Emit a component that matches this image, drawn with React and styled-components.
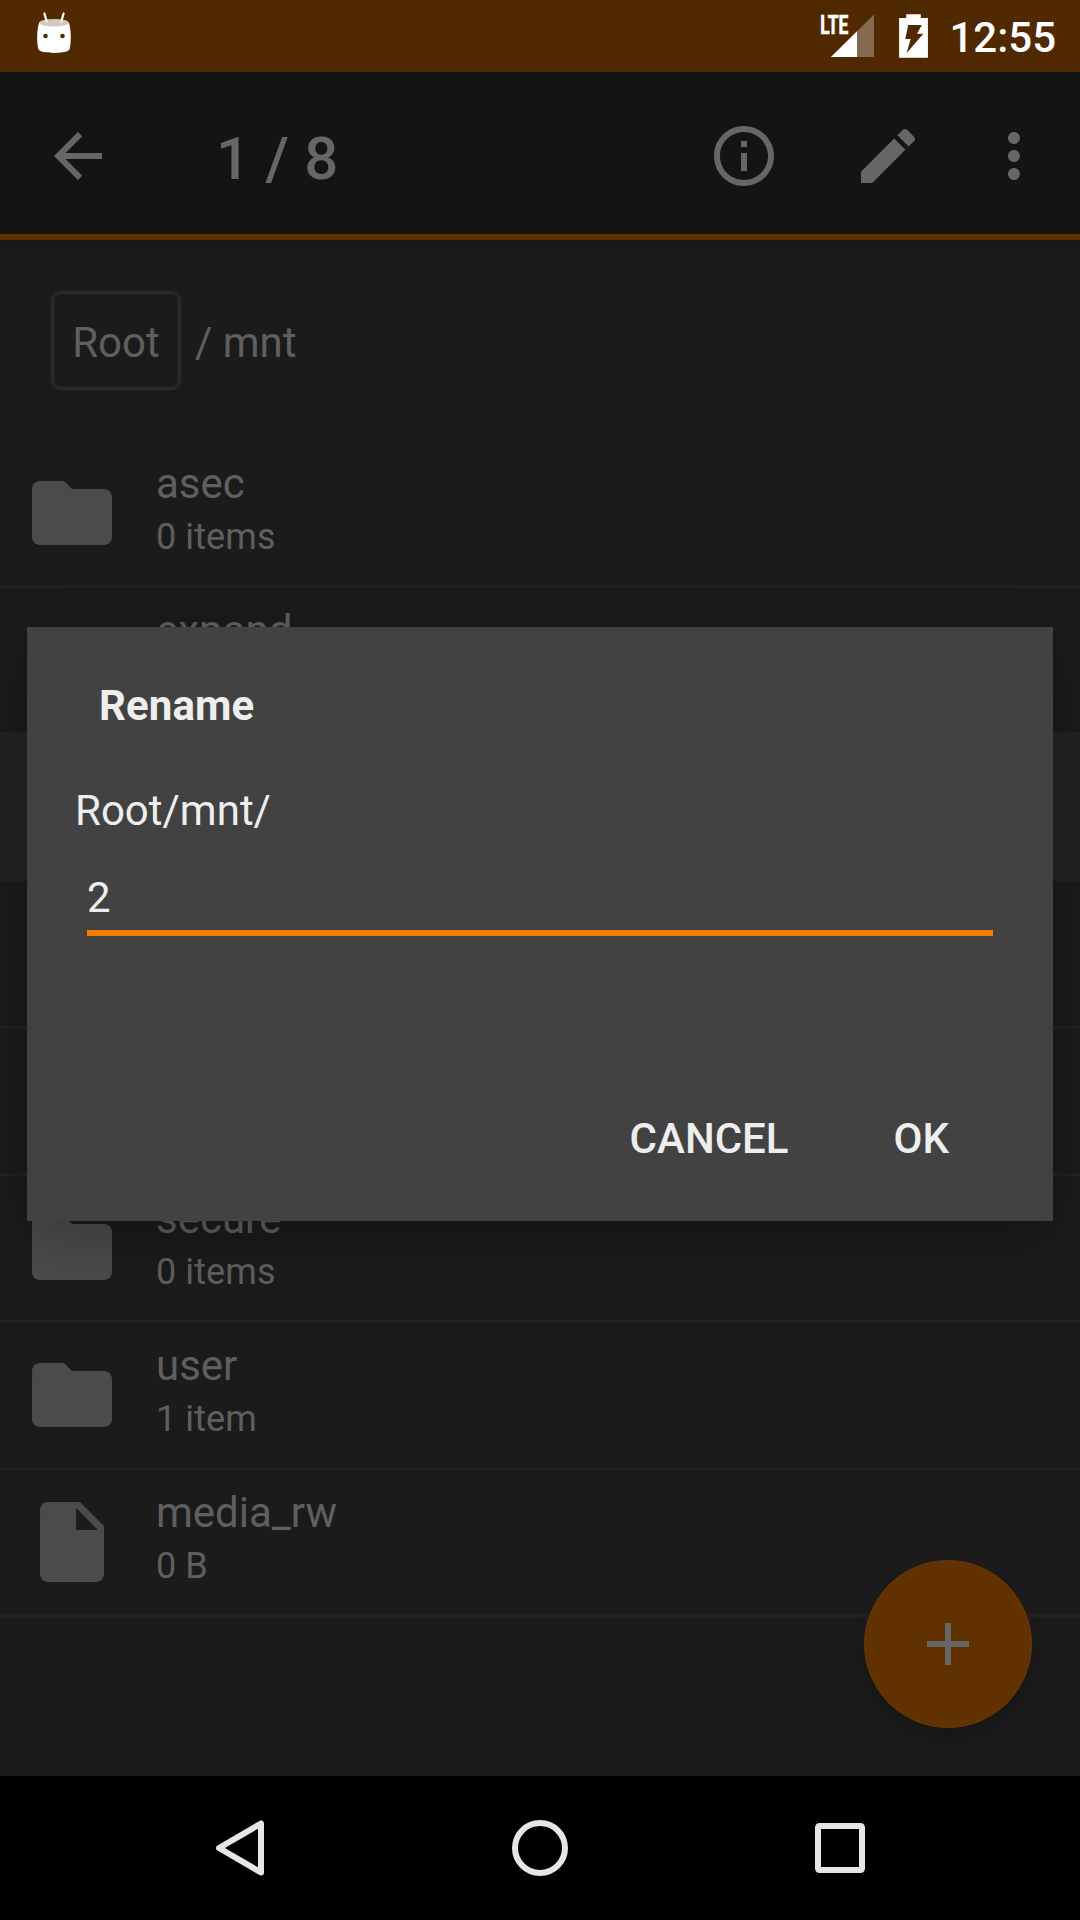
import React from "react";
import styled, { createGlobalStyle } from "styled-components";

const Global = createGlobalStyle`
  html, body { margin: 0; padding: 0; background: #000; }
  * { box-sizing: border-box; }
`;

const Device = styled.div`
  width: 1080px;
  height: 1920px;
  display: flex;
  flex-direction: column;
  overflow: hidden;
  background: #000;
  font-family: Roboto, "Noto Sans", sans-serif;
  font-size: 42px;
  line-height: 50px;
  white-space: pre;
`;

const StatusBar = styled.header`
  height: 72px;
  flex: none;
  display: flex;
  justify-content: space-between;
  background: #512900;
  color: #fff;
  padding: 0 24px;
`;

const StatusGroup = styled.div`
  display: flex;
  align-items: flex-start;
`;

const Clock = styled.time`
  font-weight: 500;
  line-height: 76px;
`;

const Screen = styled.main`
  position: relative;
  flex: 1;
  display: flex;
  flex-direction: column;
  background: #1b1b1b;
  color: #5f5f5f;
`;

const Toolbar = styled.div`
  height: 168px;
  flex: none;
  display: flex;
  align-items: center;
  padding: 6px 30px 0 42px;
  background: #141414;
  border-bottom: 6px solid #613100;
  color: #666;
  box-shadow: 0 3px 12px rgba(0, 0, 0, 0.22);
`;

const Title = styled.h1`
  flex: 1;
  margin: 0 0 0 102px;
  padding-top: 5px;
  font-size: 60px;
  line-height: 72px;
  font-weight: 500;
  letter-spacing: 0.2px;
`;

const Actions = styled.div`
  display: flex;
  align-items: center;
  gap: 72px;
  margin-right: 54px;
`;

const Glyph = styled.svg`
  display: block;
  flex: none;
  width: ${(p) => p.$size}px;
  height: ${(p) => p.$size}px;
  fill: currentColor;
`;

const Breadcrumbs = styled.nav`
  height: 201px;
  flex: none;
  display: flex;
  align-items: flex-start;
  padding: 51px 51px 0;
`;

const Crumb = styled.div`
  width: 130px;
  height: 99px;
  padding-top: 24px;
  text-align: center;
  border: 3px solid #292929;
  border-radius: 9px;
  box-shadow: 0 0 2px #262626, inset 0 0 2px #262626;
`;

const CrumbTail = styled.span`
  margin-left: 14px;
  padding-top: 27px;
`;

const List = styled.ul`
  list-style: none;
  margin: 0;
  padding: 0;
`;

const Row = styled.li`
  height: 147px;
  display: flex;
  padding-left: 24px;
  border-bottom: 3px solid #222;
  background: ${(p) => (p.$selected ? "#222" : "transparent")};
`;

const RowIcon = styled.div`
  display: flex;
  align-items: center;
  color: #4b4b4b;
`;

const RowText = styled.div`
  display: flex;
  flex-direction: column;
  gap: 7px;
  padding: 18px 0 0 36px;
`;

const Name = styled.span`
  height: 50px;
`;

const Detail = styled.span`
  font-size: 36px;
  line-height: 42px;
  letter-spacing: 0.1px;
`;

const Fab = styled.button`
  position: absolute;
  right: 48px;
  bottom: 48px;
  width: 168px;
  height: 168px;
  display: flex;
  align-items: center;
  justify-content: center;
  padding: 0;
  border: 1px solid #65360a;
  border-radius: 50%;
  background: #613100;
  color: #666;
  box-shadow: 0 10px 18px rgba(0, 0, 0, 0.2);
`;

const Overlay = styled.div`
  position: absolute;
  inset: 0;
  display: flex;
  align-items: center;
  justify-content: center;
`;

const Dialog = styled.section`
  width: 1026px;
  height: 594px;
  display: flex;
  flex-direction: column;
  background: #424242;
  color: #eee;
  box-shadow: 0 18px 54px rgba(0, 0, 0, 0.24);
`;

const DialogTitle = styled.h2`
  margin: 0;
  padding: 54px 72px 0;
  font-size: 42px;
  line-height: 50px;
  font-weight: 700;
  letter-spacing: 0.1px;
`;

const DialogPath = styled.div`
  padding: 55px 48px 0;
`;

const Field = styled.div`
  height: 67px;
  margin: 33px 60px 0;
  padding-top: 4px;
  border-bottom: 6px solid #f57c00;
`;

const Buttons = styled.div`
  flex: 1;
  display: flex;
  align-items: flex-end;
  justify-content: flex-end;
  padding: 0 104px 57px 0;
  gap: 105px;
`;

const TextButton = styled.button`
  padding: 0;
  border: 0;
  background: none;
  color: inherit;
  font: 500 42px/50px Roboto, "Noto Sans", sans-serif;
`;

const NavBar = styled.footer`
  height: 144px;
  flex: none;
  display: flex;
  justify-content: center;
  align-items: center;
  gap: 228px;
`;

const NavGlyph = styled.svg`
  width: 72px;
  height: 72px;
  fill: none;
  stroke: #e6e6e6;
  stroke-width: 6;
  stroke-linejoin: round;
`;

const paths = {
  back: "M20 11H7.83l5.59-5.59L12 4l-8 8 8 8 1.41-1.41L7.83 13H20v-2z",
  info: "M11 17h2v-6h-2v6zm1-15C6.48 2 2 6.48 2 12s4.48 10 10 10 10-4.48 10-10S17.52 2 12 2zm0 18c-4.41 0-8-3.59-8-8s3.59-8 8-8 8 3.59 8 8-3.59 8-8 8zM11 9h2V7h-2v2z",
  edit: "M3 17.25V21h3.75L17.81 9.94l-3.75-3.75L3 17.25zM20.71 7.04c.39-.39.39-1.02 0-1.41l-2.34-2.34c-.39-.39-1.02-.39-1.41 0l-1.83 1.83 3.75 3.75 1.83-1.83z",
  more: "M12 8c1.1 0 2-.9 2-2s-.9-2-2-2-2 .9-2 2 .9 2 2 2zm0 2c-1.1 0-2 .9-2 2s.9 2 2 2 2-.9 2-2-.9-2-2-2zm0 6c-1.1 0-2 .9-2 2s.9 2 2 2 2-.9 2-2-.9-2-2-2z",
  folder: "M10 4H4c-1.1 0-1.99.9-1.99 2L2 18c0 1.1.9 2 2 2h16c1.1 0 2-.9 2-2V8c0-1.1-.9-2-2-2h-8l-2-2z",
  file: "M6 2c-1.1 0-1.99.9-1.99 2L4 20c0 1.1.89 2 1.99 2H18c1.1 0 2-.9 2-2V8l-6-6H6zm7 7V3.5L18.5 9H13z",
  add: "M19 13h-6v6h-2v-6H5v-2h6V5h2v6h6v2z",
};

const Icon = ({ name, size = 72 }) => (
  <Glyph viewBox="0 0 24 24" $size={size} aria-hidden="true">
    <path d={paths[name]} />
  </Glyph>
);

const rows = [
  { name: "asec", detail: "0 items", icon: "folder" },
  { name: "expand", icon: "folder" },
  { icon: "folder", selected: true },
  { icon: "folder" },
  { icon: "folder" },
  { name: "secure", detail: "0 items", icon: "folder" },
  { name: "user", detail: "1 item", icon: "folder" },
  { name: "media_rw", detail: "0 B", icon: "file" },
];

const Marshmallow = () => (
  <svg width="60" height="72" viewBox="24 0 60 72" aria-hidden="true">
    <path d="M39.2 22.5H68.8C71.3 29 71.4 43 69.6 49C68.6 54.2 39.4 54.2 38.4 49C36.6 43 36.7 29 39.2 22.5Z" fill="#fff" />
    <ellipse cx="54" cy="22.7" rx="14.7" ry="3.8" fill="#d3c8be" />
    <path d="M44.4 13.5l2.2 7.6M63.6 13.5l-2.2 7.6" stroke="#fff" strokeWidth="2.2" strokeLinecap="round" />
    <circle cx="45.5" cy="36" r="2.3" fill="#512900" />
    <circle cx="62.5" cy="36" r="2.3" fill="#512900" />
  </svg>
);

const Signal = () => (
  <svg width="64" height="72" viewBox="818 0 64 72" aria-hidden="true">
    <path d="M874 14.5V57H831z" fill="#866a4f" />
    <path d="M857 31.2V57H831z" fill="#fff" />
    <text x="820.2" y="33.6" fill="#fff" stroke="#fff" strokeWidth="0.7" fontSize="26" fontWeight="700" textLength="28" lengthAdjust="spacingAndGlyphs">LTE</text>
  </svg>
);

const Battery = () => (
  <svg width="67" height="72" viewBox="882 0 67 72" aria-hidden="true">
    <path
      fill="#fff"
      fillRule="evenodd"
      d="M906.2 14.2h14.6v3.8h7.1v39.8h-28.8V18h7.1zM908.2 24.9h13.6l-4.8 8.8h6.3l-16.8 19.6 4.2-14.2h-5.4z"
    />
  </svg>
);

export default function App() {
  return (
    <Device>
      <Global />
      <StatusBar>
        <StatusGroup>
          <Marshmallow />
        </StatusGroup>
        <StatusGroup>
          <Signal />
          <Battery />
          <Clock>12:55</Clock>
        </StatusGroup>
      </StatusBar>
      <Screen>
        <Toolbar>
          <Icon name="back" />
          <Title>1 / 8</Title>
          <Actions>
            <Icon name="info" />
            <Icon name="edit" />
          </Actions>
          <Icon name="more" />
        </Toolbar>
        <Breadcrumbs>
          <Crumb>Root</Crumb>
          <CrumbTail>/ mnt</CrumbTail>
        </Breadcrumbs>
        <List>
          {rows.map((row, i) => (
            <Row key={i} $selected={row.selected}>
              <RowIcon>
                <Icon name={row.icon} size={96} />
              </RowIcon>
              <RowText>
                {row.name && <Name>{row.name}</Name>}
                {row.detail && <Detail>{row.detail}</Detail>}
              </RowText>
            </Row>
          ))}
        </List>
        <Fab aria-label="Add">
          <Icon name="add" />
        </Fab>
        <Overlay>
          <Dialog role="dialog">
            <DialogTitle>Rename</DialogTitle>
            <DialogPath>Root/mnt/</DialogPath>
            <Field>2</Field>
            <Buttons>
              <TextButton>CANCEL</TextButton>
              <TextButton>OK</TextButton>
            </Buttons>
          </Dialog>
        </Overlay>
      </Screen>
      <NavBar>
        <NavGlyph viewBox="0 0 72 72">
          <path d="M57 11.5V60.5L15 36Z" />
        </NavGlyph>
        <NavGlyph viewBox="0 0 72 72">
          <circle cx="36" cy="36" r="25" />
        </NavGlyph>
        <NavGlyph viewBox="0 0 72 72">
          <rect x="14" y="14" width="44" height="44" rx="1.5" />
        </NavGlyph>
      </NavBar>
    </Device>
  );
}
